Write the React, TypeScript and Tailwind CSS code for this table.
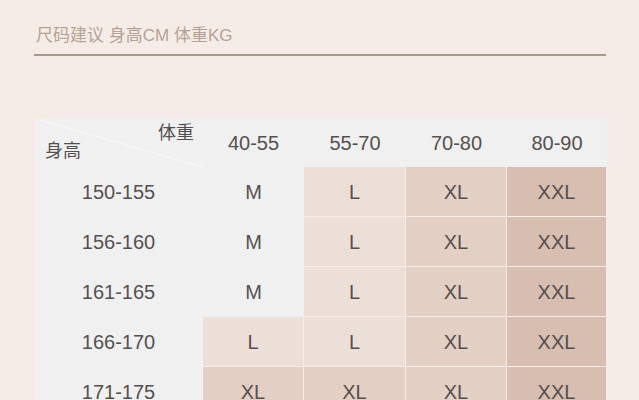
const heights = ["150-155", "156-160", "161-165", "166-170", "171-175"];
const weights = ["40-55", "55-70", "70-80", "80-90"];

const sizes: string[][] = [
  ["M", "L", "XL", "XXL"],
  ["M", "L", "XL", "XXL"],
  ["M", "L", "XL", "XXL"],
  ["L", "L", "XL", "XXL"],
  ["XL", "XL", "XL", "XXL"],
];

const cellBg: Record<string, string> = {
  M: "bg-[#f0f0f0]",
  L: "bg-[#ecdfd8] border-r border-b border-[#f7ece7]",
  XL: "bg-[#e4cfc5] border-r border-b border-[#f7ece7]",
  XXL: "bg-[#d8bdb1] border-r border-b border-[#f7ece7]",
};

const font = { fontFamily: '"Liberation Sans", "Noto Sans CJK SC", sans-serif' };

export default function App() {
  return (
    <div className="w-[639px] h-[400px] overflow-hidden bg-[#f5ece8] pt-[26px]" style={font}>
      <div className="ml-[36px] text-[17px] leading-[20px] text-[#b5a294]">
        尺码建议 身高CM 体重KG
      </div>
      <div className="ml-[34px] mt-[8px] w-[572px] h-[2px] bg-[#ab9a8c]" />

      <div className="ml-[34px] mt-[62px] w-[573px] bg-[#f0f0f0] grid grid-cols-[169px_101px_102px_101px_100px] text-[#555050] text-[20px]">
        <div className="relative h-[49px]">
          <svg className="absolute inset-0" width="169" height="49">
            <line x1="6" y1="2" x2="169" y2="49" stroke="#f6f6f6" strokeWidth="1.5" />
          </svg>
          <span className="absolute left-[124px] top-[5px] text-[18px] leading-[20px]">体重</span>
          <span className="absolute left-[11px] top-[23px] text-[18px] leading-[20px]">身高</span>
        </div>
        {weights.map((w) => (
          <div key={w} className="h-[49px] flex items-center justify-center">
            {w}
          </div>
        ))}
        {heights.map((h, r) => (
          <>
            <div key={h} className="h-[50px] flex items-center justify-center">
              {h}
            </div>
            {sizes[r].map((s, c) => (
              <div
                key={h + c}
                className={`h-[50px] flex items-center justify-center ${cellBg[s]}`}
              >
                {s}
              </div>
            ))}
          </>
        ))}
      </div>
    </div>
  );
}
